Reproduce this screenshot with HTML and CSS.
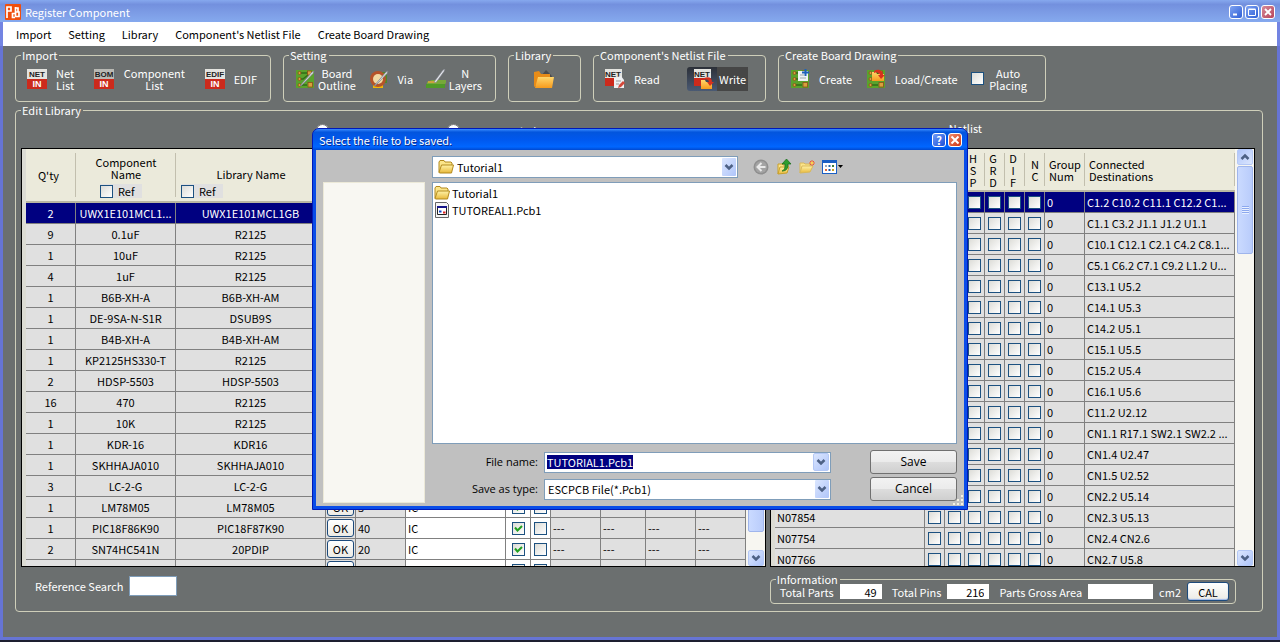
FILE: index.html
```
<!DOCTYPE html>
<html lang="en">
<head>
	<meta charset="UTF-8">
	<meta name="viewport" content="width=device-width, initial-scale=1.0">
	<title>Register Component</title>
	<link rel="stylesheet" href="styles.css">
</head>
<body>

	<svg class="defs" width="0" height="0">
		<defs>
			<linearGradient id="gold" x1="0" y1="0" x2="0" y2="1"><stop offset="0" stop-color="#fff3a8"/><stop offset="1" stop-color="#e8b83a"/></linearGradient>
			<linearGradient id="orange" x1="0" y1="0" x2="0" y2="1"><stop offset="0" stop-color="#ffd66b"/><stop offset="1" stop-color="#f79a1c"/></linearGradient>
		</defs>
		<symbol id="folder" viewBox="0 0 16 16">
			<path d="M1 13.500V3l1-1.500h4l1 1.500h6l1 1v2" fill="#fbe58a" stroke="#b38a1e"/>
			<path d="M1 13.500l2.500-7.500h12l-2 8H2z" fill="url(#gold)" stroke="#b38a1e"/>
		</symbol>
		<symbol id="board" viewBox="0 0 20 20">
			<rect x="1" y="1" width="18" height="18" fill="#5aa22c"/>
			<path d="M4 4h9M4 10h4l5-4M4 16h8" stroke="#2f6d17" fill="none" stroke-width="1.500"/>
			<g fill="#d9a03c" stroke="#8a4f1a" stroke-width=".8"><circle cx="4.500" cy="4" r="1.500"/><circle cx="4.500" cy="10" r="1.500"/><circle cx="4.500" cy="16" r="1.500"/><rect x="12.500" y="2" width="4" height="4"/><rect x="13" y="13.500" width="4.500" height="4.500"/></g>
		</symbol>
		<symbol id="pen" viewBox="0 0 20 20">
			<path d="M5 17L17 3l2-1-1 2.500L7 16z" fill="#e6e8ee" stroke="#7c8088" stroke-width=".8"/>
		</symbol>
	</svg>

	<header class="titlebar">
		<svg class="logo" viewBox="0 0 16 16"><rect width="16" height="16" rx="1" fill="#f04e0c"/><path d="M2 14V3h4v4H2M10 9.500H7.500v4H10M10.500 3v9.500h3.500v-4.500h-3.500M10.500 4H13v4" fill="none" stroke="#fff" stroke-width="1.700"/></svg>
		<h1>Register Component</h1>
		<button class="win" aria-label="Minimize"><svg viewBox="0 0 12 12"><path d="M3 8.500h4" stroke="#fff" stroke-width="2"/></svg></button>
		<button class="win" aria-label="Maximize"><svg viewBox="0 0 12 12"><path d="M2.500 3.500h7v6h-7zM2.500 3h7" fill="none" stroke="#fff"/></svg></button>
		<button class="win close" aria-label="Close"><svg viewBox="0 0 12 12"><path d="M3 3l6 6M9 3l-6 6" stroke="#fff" stroke-width="1.800"/></svg></button>
	</header>

	<nav class="menu">
		<a href="#">Import</a>
		<a href="#">Setting</a>
		<a href="#">Library</a>
		<a href="#">Component's Netlist File</a>
		<a href="#">Create Board Drawing</a>
	</nav>

	<main>
		<div class="toolbar">
			<fieldset class="tools import">
				<legend>Import</legend>
				<button class="tool"><svg class="ico" viewBox="0 0 20 20"><rect width="20" height="10" fill="#e4e4e0"/><rect y="10" width="20" height="10" fill="#cc2a1c"/><text x="10" y="8" class="tag dark">NET</text><text x="10" y="18" class="tag">IN</text></svg><span>Net<br>List</span></button>
				<button class="tool wide"><svg class="ico" viewBox="0 0 20 20"><rect width="20" height="10" fill="#b9b9b4"/><rect y="10" width="20" height="10" fill="#cc2a1c"/><text x="10" y="8" class="tag dark">BOM</text><text x="10" y="18" class="tag">IN</text></svg><span>Component<br>List</span></button>
				<button class="tool"><svg class="ico" viewBox="0 0 20 20"><rect width="20" height="10" fill="#e4e4e0"/><rect y="10" width="20" height="10" fill="#cc2a1c"/><text x="10" y="8" class="tag dark">EDIF</text><text x="10" y="18" class="tag">IN</text></svg><span>EDIF</span></button>
			</fieldset>
			<fieldset class="tools setting">
				<legend>Setting</legend>
				<button class="tool tight"><svg class="ico" viewBox="0 0 20 20"><use href="#board"/><use href="#pen"/></svg><span>Board<br>Outline</span></button>
				<button class="tool"><svg class="ico" viewBox="0 0 20 20"><path d="M4 15h10v4H4z" fill="#f2b705"/><path d="M12 3h6v11h-6z" fill="#4a8a2a"/><circle cx="9" cy="10" r="8" fill="#b5532a"/><circle cx="9" cy="10" r="5" fill="#f0d9a4"/><use href="#pen"/></svg><span>Via</span></button>
				<button class="tool tight"><svg class="ico" viewBox="0 0 20 20"><path d="M1 13l5-2h14v3l-3 3H1z" fill="#77a83a"/><path d="M0 15h19v4H0z" fill="#4f9a28"/><path d="M2 12h8v2H2z" fill="#c9a33c"/><path d="M8 13l9-12 2-1-1 2.500-8 11z" fill="#e6e8ee" stroke="#7c8088" stroke-width=".6"/></svg><span>N<br>Layers</span></button>
			</fieldset>
			<fieldset class="tools library">
				<legend>Library</legend>
				<button class="tool" aria-label="Library"><svg class="ico" viewBox="0 0 20 20"><path d="M7 7l5-6 5 5 2 3z" fill="#4b4b4d"/><path d="M0 18V3l5-1 2 3h9v3" fill="#e88c18"/><path d="M1 19L4 8h16l-2 11z" fill="url(#orange)"/></svg></button>
			</fieldset>
			<fieldset class="tools netfile">
				<legend>Component's Netlist File</legend>
				<button class="tool"><svg class="ico" viewBox="0 0 20 20"><rect width="17" height="9" fill="#e4e4e0"/><rect y="9" width="10" height="8" fill="#cc2a1c"/><text x="8" y="8" class="tag dark">NET</text><path d="M9 9l7-2 3 4v8H9z" fill="#eef0f2"/><path d="M11 12h5M11 15h3" stroke="#999"/><path d="M13 19l1-3 4-4 2 2-4 4z" fill="#d3483a"/></svg><span>Read</span></button>
				<button class="tool write"><span class="plate"><svg class="ico" viewBox="0 0 20 20"><rect width="17" height="9" fill="#e4e4e0"/><rect y="9" width="10" height="8" fill="#cc2a1c"/><text x="8" y="8" class="tag dark">NET</text><path d="M7 11h4l1 2h6v7H7z" fill="url(#orange)"/><path d="M10 9c5-2 8 0 8 4h2l-4 4-3-4h2c0-2-2-3-5-2z" fill="#d8301e"/></svg></span><span class="label">Write</span></button>
			</fieldset>
			<fieldset class="tools create">
				<legend>Create Board Drawing</legend>
				<button class="tool"><svg class="ico" viewBox="0 0 20 20"><use href="#board"/><path d="M8 2h10v10H8z" fill="#eef2f4"/><path d="M10 6h4M10 9h6" stroke="#9aa"/><path d="M15.500 0v7M12 3.500h7" stroke="#1c62b8" stroke-width="2"/></svg><span>Create</span></button>
				<button class="tool"><svg class="ico" viewBox="0 0 20 20"><use href="#board"/><path d="M6 3h4l1 2h7v7H6z" fill="url(#orange)"/><path d="M8 2c5-3 9 0 9 4h2l-4 4-3-4h2c0-2-3-3-6-2z" fill="#d8301e"/></svg><span>Load/Create</span></button>
				<label class="auto"><input type="checkbox"><span>Auto<br>Placing</span></label>
			</fieldset>
		</div>

		<fieldset class="edit">
			<legend>Edit Library</legend>
			<div class="caption">
				<div class="modes">
					<label><input type="radio" name="mode">Component Name</label>
					<label><input type="radio" name="mode">Same Symbol</label>
				</div>
				<h2>Netlist</h2>
			</div>

			<div class="grids">
				<div class="grid">
					<div class="view">
						<table class="parts">
							<colgroup><col class="w50"><col class="w100"><col class="w150"><col class="w30"><col class="w50"><col class="w100"><col class="w25"><col class="w20"><col class="w50"><col class="w45"><col class="w50"><col></colgroup>
							<thead>
								<tr>
									<th class="qty">Q'ty</th>
									<th>Component<br>Name<label class="ref"><input type="checkbox">Ref</label></th>
									<th class="lib">Library Name<label class="ref"><input type="checkbox">Ref</label></th>
									<th></th><th></th><th></th><th></th><th></th><th></th><th></th><th></th><th></th>
								</tr>
							</thead>
							<tbody id="parts"></tbody>
						</table>
					</div>
					<div class="scroll">
						<button class="up" aria-label="Scroll up"></button>
						<div class="thumb long"></div>
						<button class="down" aria-label="Scroll down"></button>
					</div>
				</div>
				<div class="grid">
					<div class="view">
						<table class="nets">
							<colgroup><col class="w150"><col class="w20"><col class="w20"><col class="w20"><col class="w20"><col class="w20"><col class="w20"><col class="w40"><col></colgroup>
							<thead>
								<tr>
									<th></th><th></th><th></th>
									<th class="flag">H<br>S<br>P</th><th class="flag">G<br>R<br>D</th><th class="flag">D<br>I<br>F</th><th>N<br>C</th>
									<th class="left">Group<br>Num</th>
									<th class="left">Connected<br>Destinations</th>
								</tr>
							</thead>
							<tbody id="nets"></tbody>
						</table>
					</div>
					<div class="scroll">
						<button class="up" aria-label="Scroll up"></button>
						<div class="thumb"></div>
						<button class="down" aria-label="Scroll down"></button>
					</div>
				</div>
			</div>

			<div class="foot">
				<div class="search">
					<label for="ref">Reference Search</label>
					<input type="text" id="ref">
				</div>
				<fieldset class="info">
					<legend>Information</legend>
					<label for="total">Total Parts</label><input type="text" id="total" value="49">
					<label for="pins">Total Pins</label><input type="text" id="pins" value="216">
					<label for="area">Parts Gross Area</label><input type="text" id="area" class="area">
					<span class="unit">cm2</span>
					<button class="cal">CAL</button>
				</fieldset>
			</div>
		</fieldset>
	</main>

	<div class="desk"></div>

	<section class="dialog" role="dialog" aria-labelledby="dlg">
		<header>
			<h2 id="dlg">Select the file to be saved.</h2>
			<button class="win" aria-label="Help">?</button>
			<button class="win close" aria-label="Close"><svg viewBox="0 0 12 12"><path d="M2.500 2.500l7 7M9.500 2.500l-7 7" stroke="#fff" stroke-width="2"/></svg></button>
		</header>
		<div class="dlgbody">
			<div class="places"></div>
			<div class="lookin">
				<div class="combo">
					<svg class="fold" viewBox="0 0 16 16"><use href="#folder"/></svg>
					<select aria-label="Save in"><option>Tutorial1</option></select>
				</div>
				<button class="nav" aria-label="Back"><svg viewBox="0 0 16 16"><circle cx="8" cy="8" r="7.500" fill="#8f8f8f"/><circle cx="8" cy="8" r="6" fill="#a3a3a3"/><path d="M12.500 8H5M8.500 4L4.500 8l4 4" fill="none" stroke="#e9e9e9" stroke-width="2"/></svg></button>
				<button class="nav" aria-label="Up one level"><svg viewBox="0 0 16 16"><path d="M2 15V5h4l1 1h5v2" fill="#fbe58a" stroke="#c9a02c"/><path d="M2 15l2-7h9l-2 6z" fill="url(#gold)" stroke="#c9a02c"/><path d="M6 12c3-1 3-4 3-7H6l4.500-5L15 5h-3c0 4-1 7-6 7z" fill="#2f9e2f" stroke="#146a14" stroke-width=".7"/></svg></button>
				<button class="nav" aria-label="New folder"><svg viewBox="0 0 16 16"><path d="M1 14V4h4l1 1h5v2" fill="#fbe58a" stroke="#d9b85a"/><path d="M1 14l2-7h11l-3 6z" fill="url(#gold)" stroke="#d9b85a"/><path d="M13 1v6M10 4h6M11 2l4 4M15 2l-4 4" stroke="#f0602c" stroke-width="1"/><circle cx="13" cy="4" r="1.200" fill="#ffd84a"/></svg></button>
				<button class="nav views" aria-label="Views"><svg viewBox="0 0 22 16"><rect x=".5" y="1.500" width="14" height="13" fill="#fff" stroke="#1a5fc4"/><path d="M0 1h15v3H0z" fill="#1a5fc4"/><g fill="#3b7a3b"><rect x="3" y="6" width="2" height="2" fill="#9ab"/><rect x="6.500" y="6" width="2" height="2" fill="#26a"/><rect x="10" y="6" width="2" height="2"/><rect x="3" y="10" width="2" height="2" fill="#e06a3a"/><rect x="6.500" y="10" width="2" height="2" fill="#15a"/><rect x="10" y="10" width="2" height="2" fill="#c9a020"/></g><path d="M16 6h5l-2.500 3z" fill="#000"/></svg></button>
			</div>
			<ul class="files">
				<li><svg class="fold" viewBox="0 0 16 16"><use href="#folder"/></svg>Tutorial1</li>
				<li><svg class="fold" viewBox="0 0 16 16"><path d="M1.500.5h11l2 2v13h-13z" fill="#f4f4f4" stroke="#666"/><path d="M3.500 4.500h9v8h-9z" fill="#fff" stroke="#222"/><path d="M3 4h10v2H3z" fill="#15158a"/><path d="M5 9.500h2.500" stroke="#14c" stroke-width="2"/><path d="M9 10.500h2.500" stroke="#d22" stroke-width="2"/></svg>TUTOREAL1.Pcb1</li>
			</ul>
			<form class="save">
				<label for="fname">File name:</label>
				<div class="combo"><input type="text" id="fname" value="TUTORIAL1.Pcb1"><button type="button" class="drop" aria-label="Recent names"></button></div>
				<button type="submit" class="push">Save</button>
				<label for="ftype">Save as type:</label>
				<div class="combo"><select id="ftype"><option>ESCPCB File(*.Pcb1)</option></select></div>
				<button type="button" class="push">Cancel</button>
			</form>
		</div>
		<svg class="grip" viewBox="0 0 12 12"><path d="M9 1h2v2H9zM5 5h2v2H5zM9 5h2v2H9zM1 9h2v2H1zM5 9h2v2H5zM9 9h2v2H9z" fill="#f4f2e4"/></svg>
	</section>

	<script src="script.js"></script>
</body>
</html>
```
FILE: styles.css
```
*{
	box-sizing: border-box;
}
body{
	margin: 0;
	height: 100vh;
	display: flex;
	flex-direction: column;
	overflow: hidden;
	background: #6b6f6f;
	color: white;
	font: 11px/14px "Noto Sans CJK JP", sans-serif;
}
button, input, select{
	font: inherit;
	margin: 0;
	padding: 0;
}
h1, h2{
	margin: 0;
	font-size: 11px;
	font-weight: normal;
}
fieldset{
	min-width: 0;
	margin: 0;
	padding: 0;
	border: 1px solid #cfcfba;
	border-radius: 4px;
}
legend{
	margin-left: 5px;
	padding: 0 2px 0 1px;
	height: 14px;
	white-space: nowrap;
}
.defs{
	position: absolute;
}

/* title bar and menu */
.titlebar{
	height: 22px;
	display: flex;
	align-items: center;
	gap: 2px;
	padding: 1px 5px 0 5px;
	background: linear-gradient(#86a8ee, #7390de 20%, #7d9de6 60%, #85a9ee);
}
.logo{
	width: 16px;
	height: 16px;
}
.titlebar h1{
	flex: 1;
	padding-left: 2px;
}
.win{
	width: 14px;
	height: 14px;
	display: flex;
	align-items: center;
	justify-content: center;
	border: 1px solid white;
	border-radius: 3px;
	background: linear-gradient(135deg, #7fa3f2, #2f5fd6);
	color: white;
	font-weight: bold;
}
.win svg{
	width: 12px;
	height: 12px;
	flex: none;
}
.win.close{
	background: linear-gradient(135deg, #d58a98, #b8435a);
}
.menu{
	height: 24px;
	display: flex;
	align-items: center;
	gap: 17px;
	margin: 0 3px;
	padding-left: 13px;
	background: white;
	box-shadow: -3px 0 #7384e2, 3px 0 #7384e2;
}
.menu a{
	color: black;
	text-decoration: none;
}

main{
	flex: 1;
	min-height: 0;
	display: flex;
	flex-direction: column;
	gap: 1px;
	padding: 2px 14px 25px 12px;
	border: 3px solid #6674d4;
	border-top: 0;
}
.desk{
	height: 2px;
	background: #1d1f30;
}

/* toolbar */
.toolbar{
	display: flex;
	gap: 12px;
}
.tools{
	height: 54px;
	display: flex;
	align-items: center;
	justify-content: space-between;
	padding: 0 13px 6px 11px;
}
.tools legend{
	margin-left: -6px;
}
.tool{
	display: flex;
	align-items: center;
	gap: 9px;
	border: 0;
	background: none;
	color: white;
	line-height: 12px;
	text-align: center;
}
.tool.wide{
	gap: 10px;
}
.tool.tight{
	gap: 3px;
}
.ico{
	width: 20px;
	height: 20px;
	flex: none;
}
.import{
	width: 256px;
}
.setting{
	width: 213px;
}
.library{
	width: 73px;
	justify-content: center;
}
.netfile{
	width: 173px;
	padding-right: 17px;
}
.create{
	width: 268px;
	padding-right: 18px;
}
.tag{
	fill: white;
	font: bold 9px "Liberation Sans", sans-serif;
	text-anchor: middle;
}
.tag.dark{
	fill: #222;
	font-size: 8px;
}
.write{
	gap: 0;
}
.plate{
	width: 30px;
	height: 24px;
	display: flex;
	align-items: center;
	justify-content: flex-end;
	padding-right: 3px;
	border-radius: 3px 0 0 3px;
	background: linear-gradient(#2c3038, #4a5a74);
}
.write .label{
	padding: 0 2px;
	background: #464646;
	line-height: 24px;
}
.auto{
	display: flex;
	align-items: center;
	gap: 5px;
	line-height: 12px;
	text-align: center;
}
input[type="checkbox"]{
	appearance: none;
	flex: none;
	width: 13px;
	height: 13px;
	border: 1px solid #1c5180;
	background: linear-gradient(135deg, #dcdcd7, #fff);
}
input[type="checkbox"]:checked{
	background: url("data:image/svg+xml,%3Csvg xmlns='http://www.w3.org/2000/svg' viewBox='0 0 11 11'%3E%3Cpath d='M2 4.500l2.500 3L9 3' fill='none' stroke='%2321a121' stroke-width='2'/%3E%3C/svg%3E"), linear-gradient(135deg, #dcdcd7, #fff);
}
input[type="radio"]{
	width: 13px;
	height: 13px;
}

/* library editor */
.edit{
	flex: 1;
	min-height: 0;
	display: flex;
	flex-direction: column;
}
.caption{
	height: 31px;
	flex: none;
	display: flex;
	padding: 4px 280px 0 300px;
	justify-content: space-between;
}
.modes{
	display: flex;
	gap: 18px;
	padding-top: 3px;
}
.modes label{
	display: flex;
	gap: 6px;
}
.caption h2{
	line-height: 14px;
}
.grids{
	flex: 1;
	min-height: 0;
	display: grid;
	grid-template-columns: 745fr 485fr;
	gap: 4px;
	margin: 0 7px 0 5px;
}
.grid{
	display: flex;
	min-width: 0;
	min-height: 0;
	border: 1px solid black;
	background: white;
	color: black;
}
.view{
	flex: 1;
	min-width: 0;
	overflow: hidden;
	border-left: 4px solid #dcdcd4;
}
table{
	width: 100%;
	table-layout: fixed;
	border-collapse: separate;
	border-spacing: 0;
}
.w20{ width: 20px; }
.w25{ width: 25px; }
.w30{ width: 30px; }
.w40{ width: 40px; }
.w45{ width: 45px; }
.w50{ width: 50px; }
.w100{ width: 100px; }
.w150{ width: 150px; }
th{
	height: 43px;
	padding: 0;
	border-bottom: 2px solid #b9b6a3;
	background: linear-gradient(#c2bfae, #c2bfae) right center / 1px calc(100% - 8px) no-repeat, #ebeadb;
	font-weight: normal;
	line-height: 12px;
}
.parts th{
	height: 54px;
	padding-top: 4px;
}
.parts th.qty{
	padding: 0 5px 0 0;
}
th.left{
	padding-left: 4px;
	text-align: left;
}
th.flag{
	padding-right: 4px;
}
.parts th.lib{
	padding-top: 16px;
}
.ref{
	width: 42px;
	display: flex;
	align-items: center;
	gap: 5px;
	margin: 4px 0 0 24px;
	background: #e0e0e0;
	line-height: 14px;
}
.lib .ref{
	margin-left: 5px;
}
td{
	height: 21px;
	padding: 0 0 0 2px;
	border-right: 1px solid #808080;
	border-bottom: 1px solid #808080;
	background: #e0e0e0;
	line-height: 18px;
	white-space: nowrap;
	overflow: hidden;
}
td.mid{
	padding: 0;
	text-align: center;
}
td.white{
	background: white;
}
td.flag, td.act{
	padding: 0 1px;
}
td input[type="checkbox"]{
	display: block;
	margin: 0 auto;
}
.picked td{
	background: #000080;
	color: white;
}
.ok{
	display: block;
	width: 27px;
	height: 18px;
	border: 1px solid #1c4a7c;
	border-radius: 3px;
	background: linear-gradient(#fff, #ecebe5);
	color: black;
	line-height: 14px;
}
.scroll{
	width: 19px;
	flex: none;
	display: flex;
	flex-direction: column;
	padding: 0 1px 0 2px;
	background: #f7f6f1;
}
.scroll button, .drop{
	width: 16px;
	height: 16px;
	flex: none;
	border: 1px solid #b4c8f6;
	border-radius: 2px;
	background: url("data:image/svg+xml,%3Csvg xmlns='http://www.w3.org/2000/svg' viewBox='0 0 14 14'%3E%3Cpath d='M3.500 5L7 8.500 10.500 5' fill='none' stroke='%234d6185' stroke-width='2.500'/%3E%3C/svg%3E") center / 14px 14px no-repeat, linear-gradient(135deg, #dbe6fe, #afc5fa);
}
.scroll .up{
	transform: rotate(180deg);
}
.scroll .down{
	margin-top: auto;
}
.thumb{
	height: 88px;
	margin-top: 1px;
	border: 1px solid #9fb5ec;
	border-radius: 2px;
	background: repeating-linear-gradient(#8ca8ee 0 1px, #e8f0ff 1px 2px) center / 7px 8px no-repeat, linear-gradient(90deg, #cadaff, #b9ccfb);
}
.thumb.long{
	height: 366px;
}

/* search and totals */
.foot{
	height: 44px;
	flex: none;
	display: flex;
	justify-content: space-between;
	align-items: flex-start;
	padding: 5px 26px 0 19px;
}
.search{
	display: flex;
	align-items: center;
	gap: 6px;
	padding-top: 4px;
}
.search input{
	width: 48px;
	height: 20px;
	border: 1px solid #7f9db9;
}
.info{
	height: 32px;
	display: flex;
	align-items: center;
	gap: 6px;
	padding: 0 6px 6px 9px;
}
.info legend{
	margin-left: -4px;
}
.info input{
	width: 42px;
	height: 15px;
	margin-right: 4px;
	padding-right: 5px;
	border: 0;
	text-align: right;
}
.info input.area{
	width: 65px;
	margin-right: 0;
}
.cal{
	width: 42px;
	height: 19px;
	border: 1px solid #1c4a7c;
	border-radius: 3px;
	background: linear-gradient(#fff, #ecebe5);
	box-shadow: inset 0 -1px 1px #9db8ea;
	color: black;
	line-height: 14px;
}

/* save dialog */
.dialog{
	position: absolute;
	top: 128px;
	left: 50%;
	width: 656px;
	height: 382px;
	transform: translateX(-50%);
	display: flex;
	flex-direction: column;
	border: 1px solid #0019b8;
	border-radius: 7px 7px 0 0;
	background: #0a4de8;
	padding: 0 3px 3px;
	color: black;
}
.dialog header{
	height: 21px;
	flex: none;
	display: flex;
	align-items: center;
	gap: 2px;
	margin: 0 -3px;
	padding: 0 5px 0 6px;
	border-radius: 6px 6px 0 0;
	background: linear-gradient(#3a8cff, #0355dd 15%, #0058ee 50%, #0066ff 85%, #0048d0);
	color: white;
}
.dialog header h2{
	flex: 1;
	text-shadow: 1px 1px #0a2a8a;
}
.dialog header .win{
	background: linear-gradient(135deg, #6f9bf8, #1c4fd8);
}
.dialog header .close{
	background: linear-gradient(135deg, #f08a6a, #cc3414);
}
.dlgbody{
	flex: 1;
	min-height: 0;
	display: grid;
	grid-template: 22px 1fr 55px / 102px 1fr;
	column-gap: 7px;
	row-gap: 4px;
	padding: 6px 7px 3px;
	background: #c0c0c0;
}
.places{
	grid-row: 2 / 4;
	border: 1px solid #ece9d8;
	background: #f8f7f2;
}
.lookin{
	grid-column: 2;
	grid-row: 1;
	display: flex;
	align-items: center;
	gap: 7px;
}
.combo{
	display: flex;
	align-items: center;
	border: 1px solid #7f9db9;
	background: white;
}
.lookin .combo{
	width: 306px;
	height: 22px;
	padding-left: 5px;
	margin-right: 8px;
}
.fold{
	width: 16px;
	height: 16px;
	flex: none;
}
.combo select{
	appearance: none;
	flex: 1;
	min-width: 0;
	height: 100%;
	padding-left: 3px;
	border: 0;
	border-radius: 0;
	color: black;
	background: url("data:image/svg+xml,%3Csvg xmlns='http://www.w3.org/2000/svg' viewBox='0 0 14 18'%3E%3Cdefs%3E%3ClinearGradient id='g' x2='1' y2='1'%3E%3Cstop stop-color='%23dbe6fe'/%3E%3Cstop offset='1' stop-color='%23afc5fa'/%3E%3C/linearGradient%3E%3C/defs%3E%3Crect width='14' height='18' rx='1' fill='url(%23g)'/%3E%3Cpath d='M3.500 7L7 10.500 10.500 7' fill='none' stroke='%234d6185' stroke-width='2.500'/%3E%3C/svg%3E") right 1px center / 14px 18px no-repeat white;
}
.nav{
	width: 16px;
	height: 16px;
	border: 0;
	background: none;
}
.nav.views{
	width: 22px;
}
.nav svg{
	display: block;
	height: 16px;
}
.files{
	grid-column: 2;
	grid-row: 2;
	margin: 0;
	padding: 1px;
	border: 1px solid #7f9db9;
	background: white;
	list-style: none;
}
.files li{
	height: 17px;
	display: flex;
	align-items: center;
	gap: 2px;
}
.save{
	grid-column: 2;
	grid-row: 3;
	display: grid;
	grid-template: 24px 24px / 106px 287px 1fr;
	row-gap: 3px;
	column-gap: 6px;
	align-items: center;
	padding-top: 2px;
}
.save label{
	text-align: right;
	font-family: "Open Sans", sans-serif;
}
.save .combo{
	height: 21px;
}
.save .combo input{
	flex: 1;
	min-width: 0;
	padding: 0 2px;
	border: 0;
	outline: 0;
}
.save .combo input::selection{
	background: #000080;
	color: white;
}
.drop{
	height: 18px;
	margin-right: 1px;
}
.push{
	justify-self: end;
	width: 87px;
	height: 24px;
	border: 1px solid #707070;
	border-radius: 3px;
	background: linear-gradient(#f2f2f2, #ebebeb 50%, #ddd 50%, #cfcfcf);
	color: black;
	font-family: "Open Sans", sans-serif;
	font-size: 12px;
}
.grip{
	position: absolute;
	right: 3px;
	bottom: 3px;
	width: 12px;
	height: 12px;
}
```
FILE: script.js
```
// qty, component, library, pins
const parts = [
	[2, 'UWX1E101MCL1...', 'UWX1E101MCL1GB'],
	[9, '0.1uF', 'R2125'],
	[1, '10uF', 'R2125'],
	[4, '1uF', 'R2125'],
	[1, 'B6B-XH-A', 'B6B-XH-AM'],
	[1, 'DE-9SA-N-S1R', 'DSUB9S'],
	[1, 'B4B-XH-A', 'B4B-XH-AM'],
	[1, 'KP2125HS330-T', 'R2125'],
	[2, 'HDSP-5503', 'HDSP-5503'],
	[16, '470', 'R2125'],
	[1, '10K', 'R2125'],
	[1, 'KDR-16', 'KDR16'],
	[1, 'SKHHAJA010', 'SKHHAJA010'],
	[3, 'LC-2-G', 'LC-2-G'],
	[1, 'LM78M05', 'LM78M05', 3],
	[1, 'PIC18F86K90', 'PIC18F87K90', 40],
	[2, 'SN74HC541N', '20PDIP', 20],
	['', '', '', '']
];

// net name, destinations
const nets = [
	['', 'C1.2 C10.2 C11.1 C12.2 C1...'],
	['', 'C1.1 C3.2 J1.1 J1.2 U1.1'],
	['', 'C10.1 C12.1 C2.1 C4.2 C8.1...'],
	['', 'C5.1 C6.2 C7.1 C9.2 L1.2 U...'],
	['', 'C13.1 U5.2'],
	['', 'C14.1 U5.3'],
	['', 'C14.2 U5.1'],
	['', 'C15.1 U5.5'],
	['', 'C15.2 U5.4'],
	['', 'C16.1 U5.6'],
	['', 'C11.2 U2.12'],
	['', 'CN1.1 R17.1 SW2.1 SW2.2 ...'],
	['', 'CN1.4 U2.47'],
	['', 'CN1.5 U2.52'],
	['', 'CN2.2 U5.14'],
	['N07854', 'CN2.3 U5.13'],
	['N07754', 'CN2.4 CN2.6'],
	['N07766', 'CN2.7 U5.8']
];

const check = '<input type="checkbox" aria-label="flag">';
const ticked = '<input type="checkbox" aria-label="flag" checked>';

document.getElementById('parts').innerHTML = parts.map(([qty, name, lib, pins], i) => `
	<tr class="${i === 0 ? 'picked' : ''}">
		<td class="mid">${qty}</td><td class="mid">${name}</td><td class="mid">${lib}</td>
		<td class="act"><button class="ok">${pins ? 'OK' : ''}</button></td><td>${pins ?? ''}</td>
		<td class="white">${pins ? 'IC' : ''}</td>
		<td class="white flag">${ticked}</td><td class="white flag">${check}</td>
		${(pins ? '<td>---</td>' : '<td></td>').repeat(4)}
	</tr>`).join('');

document.getElementById('nets').innerHTML = nets.map(([name, dest], i) => `
	<tr class="${i === 0 ? 'picked' : ''}">
		<td>${name}</td>${`<td class="flag">${check}</td>`.repeat(6)}<td>0</td><td>${dest}</td>
	</tr>`).join('');

document.getElementById('fname').select();
```
